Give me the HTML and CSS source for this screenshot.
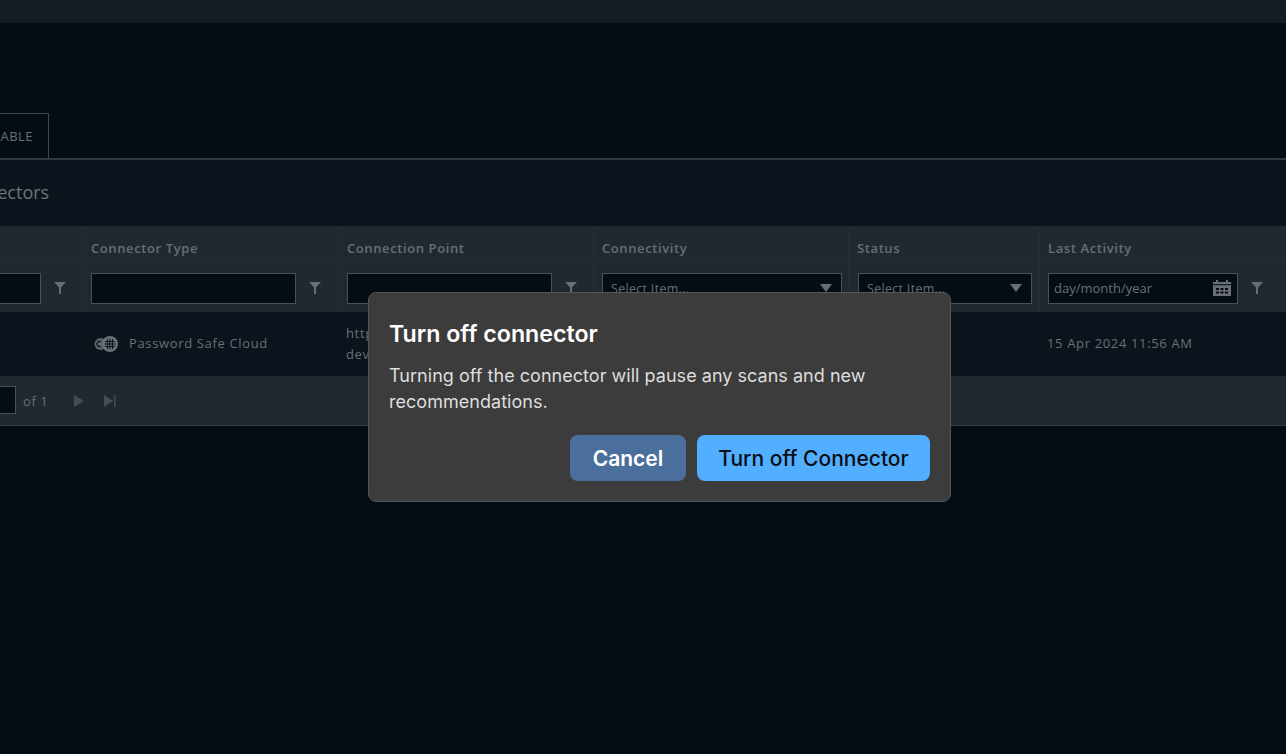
FILE: index.html
```html
<!DOCTYPE html>
<html lang="en">
<head>
<meta charset="utf-8">
<title>Connectors</title>
<link rel="stylesheet" href="styles.css">
</head>
<body>
<svg class="defs" width="0" height="0" aria-hidden="true">
  <symbol id="funnel" viewBox="0 0 12 12"><path d="M0 0h12L7 5.500V12H5V5.500z"/></symbol>
</svg>
<header class="topbar"></header>
<main class="page">
  <nav class="tabs"><div class="tab">AVAILABLE</div></nav>
  <section class="panel">
    <h1 class="title">Connectors</h1>
    <div class="table">
      <div class="row head">
        <div class="cell">Name</div>
        <div class="cell">Connector Type</div>
        <div class="cell">Connection Point</div>
        <div class="cell">Connectivity</div>
        <div class="cell">Status</div>
        <div class="cell">Last Activity</div>
      </div>
      <div class="row filters">
        <div class="cell"><span class="input first"></span><svg class="funnel"><use href="#funnel"/></svg></div>
        <div class="cell"><span class="input"></span><svg class="funnel"><use href="#funnel"/></svg></div>
        <div class="cell"><span class="input"></span><svg class="funnel"><use href="#funnel"/></svg></div>
        <div class="cell"><span class="input select">Select Item...<i class="caret"></i></span></div>
        <div class="cell"><span class="input select">Select Item...<i class="caret"></i></span></div>
        <div class="cell"><span class="input date">day/month/year
          <svg class="cal" viewBox="0 0 18 16"><path d="M0 2h3V0h2v2h8V0h2v2h3v14H0z"/><g fill="#040c14"><rect x="3" y="8" width="3" height="2"/><rect x="7.500" y="8" width="3" height="2"/><rect x="12" y="8" width="3" height="2"/><rect x="3" y="11.500" width="3" height="2"/><rect x="7.500" y="11.500" width="3" height="2"/><rect x="12" y="11.500" width="3" height="2"/><rect y="4.200" width="18" height="1"/></g></svg>
        </span><svg class="funnel"><use href="#funnel"/></svg></div>
      </div>
      <div class="row body">
        <div class="cell"></div>
        <div class="cell type">
          <svg class="globe" viewBox="0 0 24 18"><circle cx="6.500" cy="9" r="6" fill="#5d6266"/><circle cx="16" cy="9" r="8" fill="#6a6f73"/><path d="M7 6.800a2.600 2.600 0 1 0 0 4.400" stroke="#0b141d" stroke-width="1.300" fill="none"/><path d="M11 6.500h10M10.500 9h11M11 11.500h10M13.500 4v10M16 3.500v11M18.500 4v10" stroke="#0b141d" stroke-width="1" fill="none"/></svg>
          Password Safe Cloud
        </div>
        <div class="cell url">https://example-<br>dev.example.com</div>
        <div class="cell"></div>
        <div class="cell"></div>
        <div class="cell">15 Apr 2024 11:56 AM</div>
      </div>
      <div class="pager">
        <span class="input page-no"></span>
        <span class="of">of 1</span>
        <svg class="next" viewBox="0 0 10 12"><path d="M0 0l10 6-10 6z"/></svg>
        <svg class="last" viewBox="0 0 12 12"><path d="M0 0l9 6-9 6z"/><rect x="10" width="1.500" height="12"/></svg>
      </div>
    </div>
  </section>
</main>
<div class="modal" role="dialog">
  <h2 class="modal-title">Turn off connector</h2>
  <p class="modal-text">Turning off the connector will pause any scans and new recommendations.</p>
  <div class="actions">
    <button class="btn cancel">Cancel</button>
    <button class="btn primary">Turn off Connector</button>
  </div>
</div>
</body>
</html>
```
FILE: styles.css
```css
* { box-sizing: border-box; }
html, body { margin: 0; height: 100%; }
body {
  background: #040c14;
  font-family: "Open Sans", sans-serif;
  color: #6a6e71;
  overflow: hidden;
  position: relative;
}
.defs { position: absolute; }
.topbar { height: 23px; background: #141c24; }
.page { margin-left: -117px; width: 1403px; padding-top: 90px; }
.tabs { display: flex; height: 47px; padding-left: 65px; }
.tab {
  border: 1px solid #3f464c;
  border-bottom: 0;
  padding: 0 15px;
  font-size: 13px;
  letter-spacing: .4px;
  line-height: 45px;
  height: 46px;
  color: #6b7074;
}
.panel { background: #0b141c; border-top: 2px solid #2f363c; margin-top: -2px; }
.title {
  margin: 0;
  font-size: 18px;
  font-weight: 400;
  line-height: 65px;
  height: 66px;
  padding-left: 70px;
  color: #6f7377;
}
.table { background: #0b141c; }
.row { display: grid; grid-template-columns: 199px 256px 255px 255px 191px 247px; }
.head { height: 38px; background: #212930; border-bottom: 1px solid #262e35; }
.head .cell { font-size: 13px; font-weight: 600; line-height: 44px; padding-left: 8px; letter-spacing: .6px; border-left: 1px solid #262e35; }
.filters { height: 48px; background: #212930; }
.filters .cell { display: flex; align-items: flex-start; padding: 9px 0 0 8px; border-left: 1px solid #262e35; }
.filters .cell:nth-child(5) { padding-left: 9px; }
.input {
  display: block;
  flex: none;
  height: 31px;
  width: 205px;
  background: #040c14;
  border: 1px solid #4a5056;
}
.first { width: 149px; }
.funnel { width: 12px; height: 12px; fill: #696e72; margin: 9px 0 0 13px; flex: none; }
.select {
  width: 240px;
  font-size: 12.500px;
  letter-spacing: .3px;
  line-height: 29px;
  padding-left: 8px;
  position: relative;
}
.filters .cell:nth-child(5) .select { width: 174px; }
.caret {
  position: absolute;
  right: 9px;
  top: 10px;
  border-left: 6px solid transparent;
  border-right: 6px solid transparent;
  border-top: 8px solid #696e72;
}
.date {
  width: 190px;
  font-size: 13px;
  line-height: 29px;
  padding-left: 5px;
  position: relative;
  color: #6b7074;
}
.cal { position: absolute; right: 6px; top: 6px; width: 18px; height: 16px; fill: #6a6f73; }
.body { height: 64px; padding-bottom: 2px; font-size: 13px; align-items: center; background: #0b141c; letter-spacing: .65px; color: #6c6f72; }
.body .cell { padding-left: 8px; }
.type { display: flex; align-items: center; gap: 11px; padding-left: 12px !important; }
.globe { width: 24px; height: 18px; flex: none; margin-top: 1px; }
.url { line-height: 21px; margin-top: 2px; }
.pager {
  height: 50px;
  background: #212930;
  border-bottom: 1px solid #3a4148;
  display: flex;
  align-items: center;
  padding-left: 85px;
  font-size: 13px;
}
.page-no { width: 48px; height: 28px; margin-bottom: 1px; }
.of { margin-left: 7px; letter-spacing: .6px; }
.next { width: 10px; height: 12px; fill: #474c51; margin-left: 26px; }
.last { width: 12px; height: 12px; fill: #474c51; margin-left: 20px; }
.modal {
  position: absolute;
  left: 368px;
  top: 292px;
  width: 583px;
  height: 210px;
  background: #3c3c3c;
  border: 1px solid #565656;
  border-radius: 8px;
  padding: 26px 20px 20px;
  font-family: Inter, sans-serif;
  color: #fff;
}
.modal-title { margin: 0; font-size: 23.200px; font-weight: 600; line-height: 30px; }
.modal-text { margin: 14px 0 0; font-size: 18px; line-height: 26px; letter-spacing: .03px; color: #dedede; font-weight: 400; }
.actions { display: flex; justify-content: flex-end; gap: 11px; margin-top: 20px; }
.btn {
  height: 46px;
  border: 0;
  border-radius: 8px;
  font-family: Inter, sans-serif;
  font-size: 21px;
  font-weight: 600;
  padding: 0;
}
.cancel { background: #4a6f9c; color: #fff; width: 116px; }
.primary { background: #52aeff; color: #0a0f14; width: 233px; font-weight: 500; }
```
